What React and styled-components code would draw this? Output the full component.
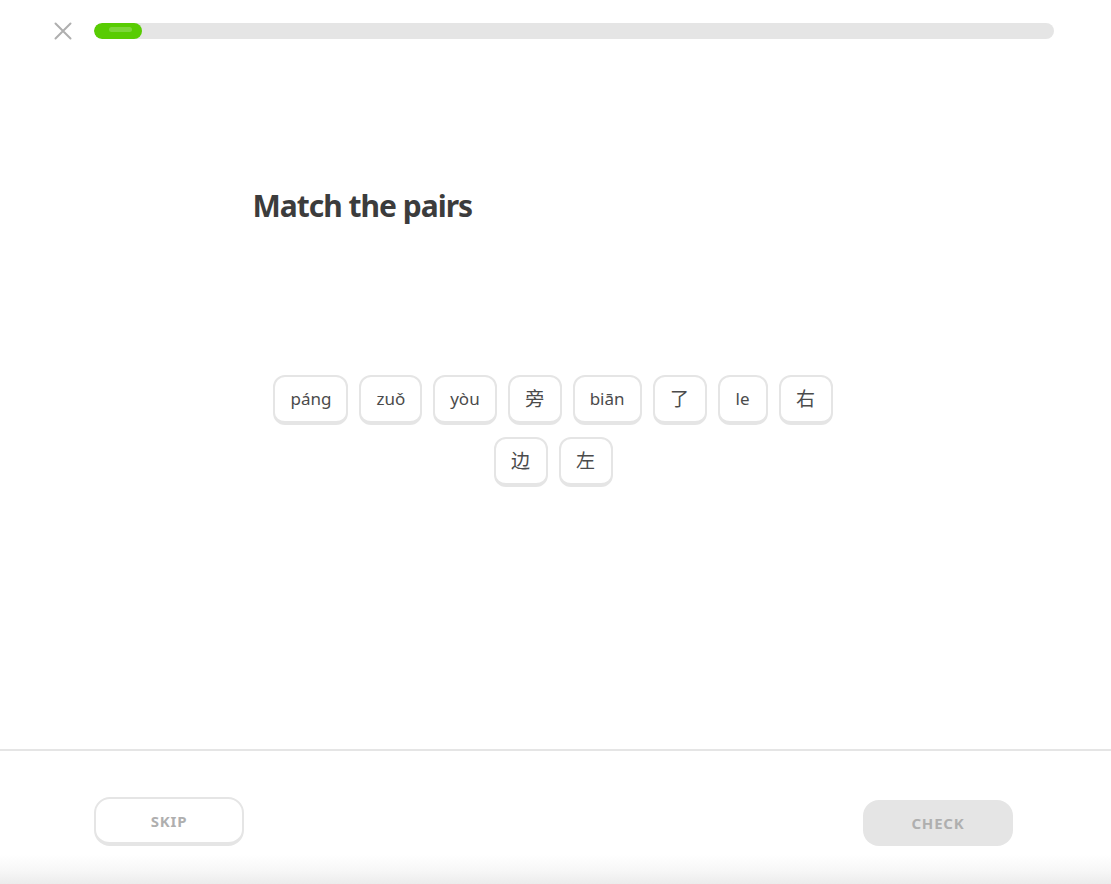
import React from "react";
import styled, { createGlobalStyle } from "styled-components";

const Global = createGlobalStyle`
  html, body { margin: 0; padding: 0; background: #fff; }
  body { font-family: "Noto Sans", "Noto Sans CJK SC", sans-serif; }
  #root { min-height: 100vh; }
`;

const Page = styled.div`
  display: flex;
  flex-direction: column;
  min-height: 884px;
  height: 100vh;
`;

const Header = styled.header`
  display: flex;
  align-items: center;
  gap: 19px;
  padding: 23px 57px 0 51px;
  height: 16px;
`;

const CloseButton = styled.button`
  width: 24px;
  height: 16px;
  padding: 0;
  border: 0;
  background: none;
  display: flex;
  align-items: center;
  justify-content: center;
  cursor: pointer;
`;

const Track = styled.div`
  flex: 1;
  height: 16px;
  border-radius: 8px;
  background: #e5e5e5;
  overflow: hidden;
`;

const Fill = styled.div`
  position: relative;
  height: 100%;
  border-radius: 8px;
  background: #58cc02;
`;

const Shine = styled.div`
  position: absolute;
  left: 15px;
  right: 10px;
  top: 4px;
  height: 5px;
  border-radius: 3px;
  background: rgba(255, 255, 255, 0.22);
`;

const Main = styled.main`
  flex: 1;
  width: 606px;
  margin: 0 auto;
  display: flex;
  flex-direction: column;
`;

const Title = styled.h1`
  margin: 149px 0 0;
  font-family: "Noto Sans", sans-serif;
  font-weight: 700;
  font-size: 30px;
  letter-spacing: -1px;
  line-height: 36px;
  color: #3c3c3c;
`;

const Tiles = styled.div`
  margin-top: 151px;
  padding-right: 5px;
  display: flex;
  flex-wrap: wrap;
  justify-content: center;
  column-gap: 11px;
  row-gap: 12px;
`;

const Tile = styled.button`
  box-sizing: border-box;
  height: 50px;
  min-width: ${(p) => (p.$cjk ? "54px" : "50px")};
  padding: 0 ${(p) => (p.$cjk ? "14px" : "15px")};
  border: 2px solid #e5e5e5;
  border-bottom-width: 4px;
  border-radius: 12px;
  background: #fff;
  color: #4b4b4b;
  font-family: "Noto Sans", "Noto Sans CJK SC", sans-serif;
  font-size: ${(p) => (p.$cjk ? "19px" : "17px")};
  line-height: 20px;
  display: flex;
  align-items: center;
  justify-content: center;
  cursor: pointer;
`;

const Footer = styled.footer`
  height: 135px;
  border-top: 2px solid #e5e5e5;
  background: linear-gradient(to bottom, #fff 0, #fff 78%, #f7f7f7 90%, #ececec 100%);
  display: flex;
  align-items: flex-end;
  justify-content: space-between;
  padding: 0 98px 38px 94px;
  box-sizing: border-box;
`;

const FooterButton = styled.button`
  box-sizing: border-box;
  width: 150px;
  height: ${(p) => (p.$primary ? "46px" : "49px")};
  border-radius: 16px;
  border: ${(p) => (p.$primary ? "0" : "2px solid #e5e5e5")};
  border-bottom-width: ${(p) => (p.$primary ? "0" : "4px")};
  background: ${(p) => (p.$primary ? "#e5e5e5" : "#fff")};
  color: #afafaf;
  font-family: "Noto Sans", sans-serif;
  font-weight: 700;
  font-size: 15px;
  letter-spacing: 0.8px;
  text-transform: uppercase;
  display: flex;
  align-items: center;
  justify-content: center;
  cursor: pointer;
`;

const words = [
  { t: "páng" },
  { t: "zuǒ" },
  { t: "yòu" },
  { t: "旁", cjk: true },
  { t: "biān" },
  { t: "了", cjk: true },
  { t: "le" },
  { t: "右", cjk: true },
  { t: "边", cjk: true },
  { t: "左", cjk: true },
];

export default function App() {
  return (
    <>
      <Global />
      <Page>
        <Header>
          <CloseButton aria-label="Close">
            <svg width="18" height="18" viewBox="0 0 18 18">
              <path d="M1.5 1.5 L16.5 16.5 M16.5 1.5 L1.5 16.5" stroke="#afafaf" strokeWidth="2" strokeLinecap="round" fill="none" />
            </svg>
          </CloseButton>
          <Track>
            <Fill style={{ width: "48px" }}>
              <Shine />
            </Fill>
          </Track>
        </Header>
        <Main>
          <Title>Match the pairs</Title>
          <Tiles>
            {words.map((w) => (
              <Tile key={w.t} $cjk={w.cjk}>{w.t}</Tile>
            ))}
          </Tiles>
        </Main>
        <Footer>
          <FooterButton>Skip</FooterButton>
          <FooterButton $primary>Check</FooterButton>
        </Footer>
      </Page>
    </>
  );
}
